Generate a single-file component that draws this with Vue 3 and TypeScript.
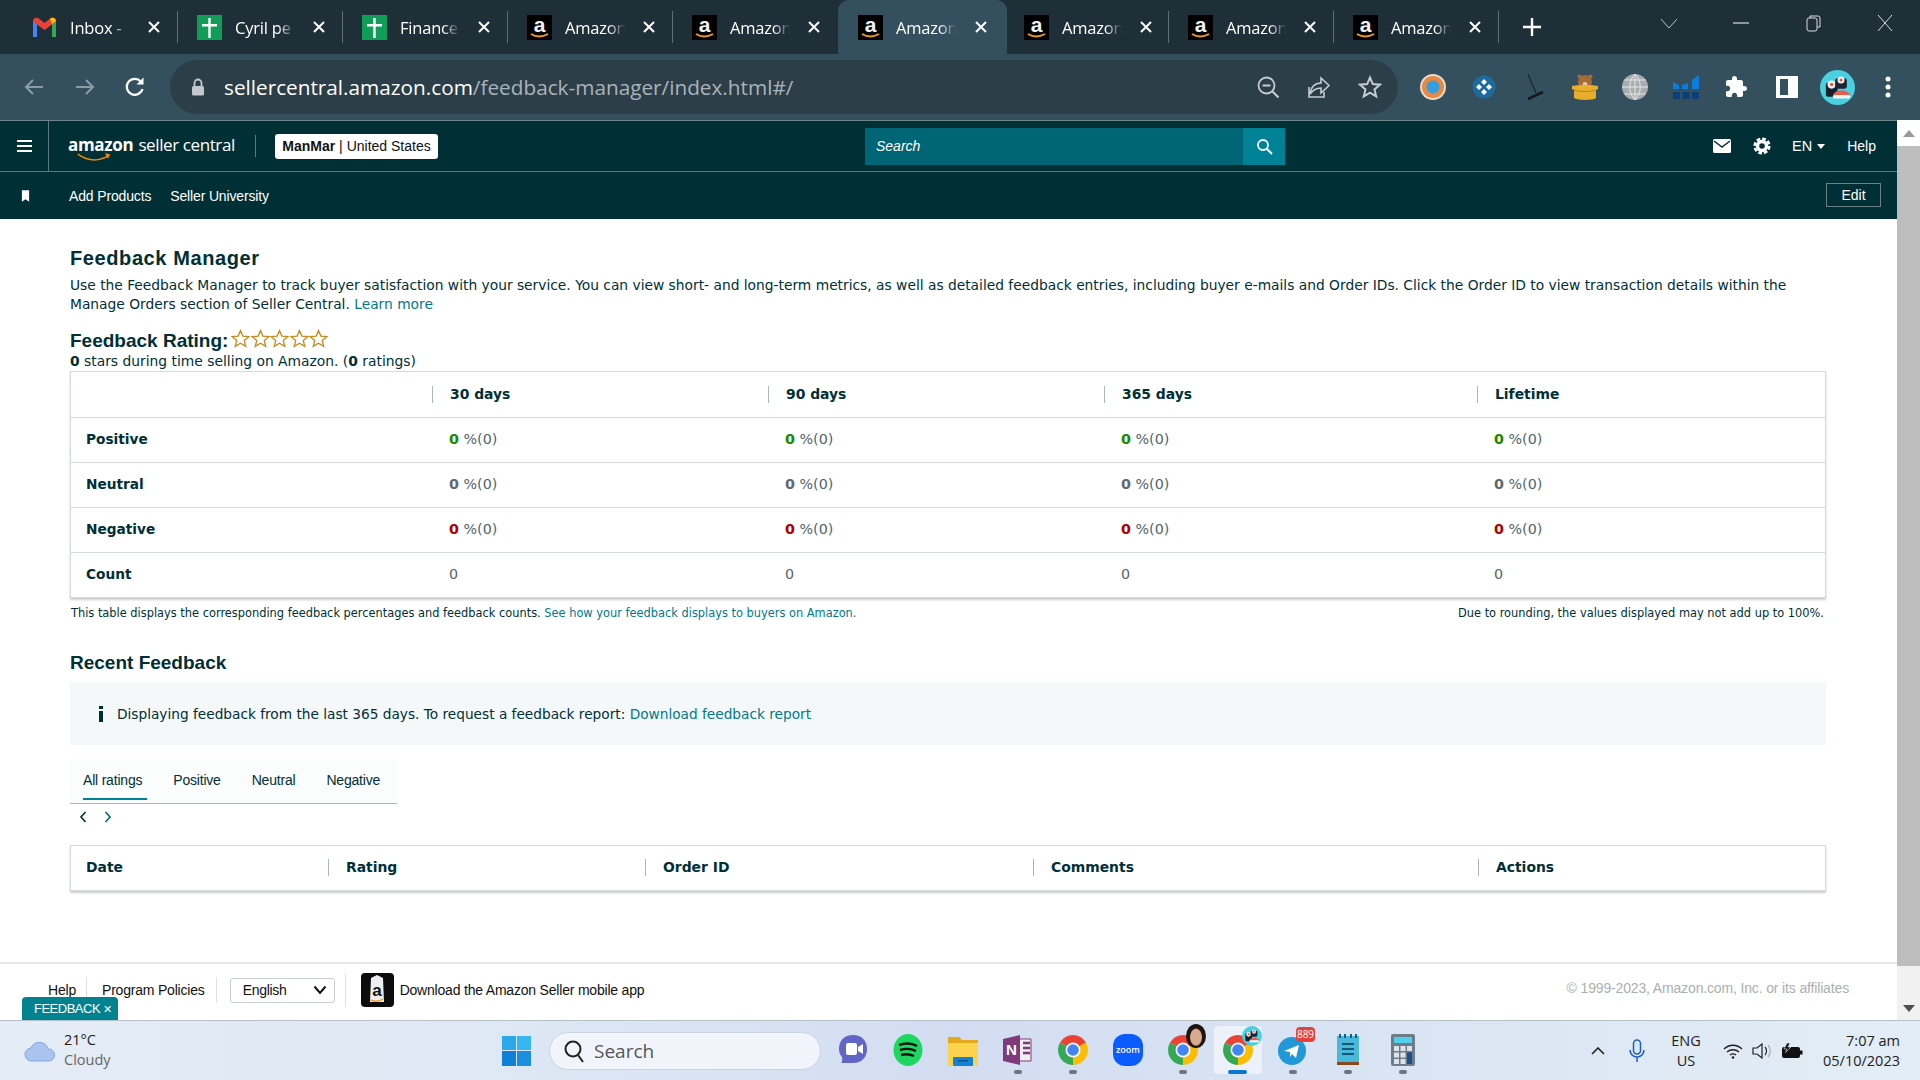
<script setup lang="ts">
interface BrowserTab {
  icon: string;
  title: string;
}

const tabs: BrowserTab[] = [
  { icon: "gmail", title: "Inbox -" },
  { icon: "sheets", title: "Cyril pe" },
  { icon: "sheets", title: "Finance" },
  { icon: "amazon", title: "Amazon" },
  { icon: "amazon", title: "Amazon" },
  { icon: "amazon", title: "Amazon" },
  { icon: "amazon", title: "Amazon" },
  { icon: "amazon", title: "Amazon" },
  { icon: "amazon", title: "Amazon" },
];
const activeTab = 5;

const periods = ["30 days", "90 days", "365 days", "Lifetime"];
const rows = [
  { label: "Positive", tone: "good" },
  { label: "Neutral", tone: "flat" },
  { label: "Negative", tone: "bad" },
];
const ratingTabs = ["All ratings", "Positive", "Neutral", "Negative"];
const recentColumns = ["Date", "Rating", "Order ID", "Comments", "Actions"];
const dots = ["", "", "", "y", "y", "", "y", "a", "y", "y", "y"];
</script>

<template>
  <div class="screen">
    <svg class="defs" width="0" height="0">
      <symbol id="amazon" viewBox="0 0 25 25">
        <rect width="25" height="25" fill="#000" />
        <text x="12.5" y="16.500" text-anchor="middle" font-family="Liberation Sans, sans-serif" font-weight="700" font-size="21" fill="#f2f2f2">a</text>
        <path d="M4 19q8 5 17 0" fill="none" stroke="#f09a1f" stroke-width="2" />
      </symbol>
      <symbol id="sheets" viewBox="0 0 25 25">
        <rect width="25" height="25" fill="#0f9d58" />
        <path d="M11.3 3h2.4v6H20v2.4h-6.3V23h-2.4V11.4H5V9h6.3z" fill="#fff" />
      </symbol>
      <symbol id="gmail" viewBox="0 0 25 25">
        <path d="M1 22V6l4 2v14z" fill="#4285f4" />
        <path d="M20 22V8l4-2v16z" fill="#34a853" />
        <path d="M1 6c0-3 3-4 5-3l6.500 5L19 3c2-1 5 0 5 3l-4 3.500-7.500 5.500L5 9.500z" fill="#ea4335" />
        <path d="M20 9l4-3c0-3-3-4-5-3l-1 1z" fill="#fbbc04" />
      </symbol>
      <symbol id="chrome" viewBox="0 0 30 30">
        <path d="M15 15L2.010 7.500A15 15 0 0 1 27.990 7.500Z" fill="#ea4335" />
        <path d="M15 15L27.990 7.500A15 15 0 0 1 15 30Z" fill="#fbbc04" />
        <path d="M15 15L15 30A15 15 0 0 1 2.010 7.500Z" fill="#34a853" />
        <circle cx="15" cy="15" r="7.500" fill="#fff" />
        <circle cx="15" cy="15" r="5.800" fill="#4285f4" />
      </symbol>
      <symbol id="sushi" viewBox="0 0 30 30">
        <circle cx="15" cy="15" r="15" fill="#4ad0e0" />
        <rect x="5" y="11" width="10" height="12" rx="2" fill="#14202c" />
        <circle cx="10" cy="12.500" r="3.500" fill="#f3f3f3" />
        <circle cx="10" cy="12.500" r="1.500" fill="#e8534a" />
        <rect x="13" y="7" width="10" height="9" rx="2" fill="#1d2433" />
        <circle cx="18" cy="8.500" r="3" fill="#f3f3f3" />
        <circle cx="18" cy="8.500" r="1.300" fill="#e8534a" />
        <path d="M11 22c1-6 14-6 15 0z" fill="#ef5a4c" />
        <rect x="11" y="21.500" width="15" height="3" rx="1.500" fill="#f5f5f5" />
      </symbol>
    </svg>

    <!-- browser chrome -->
    <div class="tabstrip">
      <div
        v-for="(tab, i) in tabs"
        :key="i"
        class="tab"
        :class="{ active: i === activeTab, afterActive: i === activeTab + 1, plain: i === activeTab - 1 }"
      >
        <svg class="favicon"><use :href="'#' + tab.icon" /></svg>
        <span class="tabTitle">{{ tab.title }}</span>
        <svg class="tabClose" viewBox="0 0 14 14"><path d="M2 2l10 10M12 2L2 12" stroke="#fff" stroke-width="2" /></svg>
      </div>
      <svg class="newTab" viewBox="0 0 20 20"><path d="M10 1v18M1 10h18" stroke="#fff" stroke-width="2.400" /></svg>
      <div class="windowBtns">
        <svg class="winBtn" viewBox="0 0 18 18"><path d="M1 5l8 9 8-9" fill="none" stroke="#b7c0c5" stroke-width="1" /></svg>
        <svg class="winBtn" viewBox="0 0 18 18"><path d="M1 9h16" stroke="#d8dde0" stroke-width="1.200" /></svg>
        <svg class="winBtn" viewBox="0 0 18 18"><rect x="3" y="4" width="10" height="13" rx="2" fill="none" stroke="#d8dde0" /><path d="M6 4V2h8a2 2 0 0 1 2 2v9h-3" fill="none" stroke="#d8dde0" /></svg>
        <svg class="winBtn" viewBox="0 0 18 18"><path d="M2 1l14 16M16 1L2 17" stroke="#d8dde0" stroke-width="1" /></svg>
      </div>
    </div>

    <div class="toolbar">
      <svg class="navIcon" viewBox="0 0 24 24"><path d="M21 12H4M11 5l-7 7 7 7" fill="none" stroke="#8b9ca5" stroke-width="2" /></svg>
      <svg class="navIcon forward" viewBox="0 0 24 24"><path d="M3 12h17M13 5l7 7-7 7" fill="none" stroke="#8b9ca5" stroke-width="2" /></svg>
      <svg class="navIcon reload" viewBox="0 0 24 24"><path d="M19.500 14a8 8 0 1 1-1.700-7.500" fill="none" stroke="#fff" stroke-width="2.200" /><path d="M20.500 2.500v7h-7z" fill="#fff" /></svg>
      <div class="urlBar">
        <svg class="lock" viewBox="0 0 14 18"><path d="M3.500 8V5a3.500 3.500 0 0 1 7 0v3" fill="none" stroke="#c3c9cc" stroke-width="1.800" /><rect x="1" y="8" width="12" height="9.500" rx="1.500" fill="#c3c9cc" /></svg>
        <span class="url"><span class="host">sellercentral.amazon.com</span>/feedback-manager/index.html#/</span>
        <svg class="urlIcon first" viewBox="0 0 24 24"><circle cx="10.500" cy="10.500" r="8" fill="none" stroke="#c6ccd0" stroke-width="1.800" /><path d="M6.500 10.500h8M16 16l6.500 6.500" stroke="#c6ccd0" stroke-width="2" /></svg>
        <svg class="urlIcon" viewBox="0 0 24 24"><path d="M2 12v10h15v-5M3 19c1-7 5-11 11-11V3l8 7.500-8 7.500v-5c-5 0-8 2-11 6z" fill="none" stroke="#c6ccd0" stroke-width="1.600" /></svg>
        <svg class="urlIcon" viewBox="0 0 24 24"><path d="M12 2.500l2.800 6.600 7.200.6-5.500 4.700 1.700 7-6.200-3.700-6.200 3.700 1.700-7L2 9.700l7.200-.6z" fill="none" stroke="#c6ccd0" stroke-width="2" /></svg>
      </div>
      <div class="extensions">
        <svg class="ext" viewBox="0 0 28 28"><circle cx="14" cy="14" r="13" fill="#ecd9c8" /><circle cx="14" cy="14" r="11" fill="#e58a45" /><circle cx="14" cy="14" r="6.500" fill="#2f9fe0" /></svg>
        <svg class="ext" viewBox="0 0 28 28"><circle cx="14" cy="14" r="11.500" fill="#1d6b9c" /><path d="M14 6l3 3-3 3-3-3zM14 16l3 3-3 3-3-3zM6 14l3-3 3 3-3 3zM16 14l3-3 3 3-3 3z" fill="#fff" /></svg>
        <svg class="ext" viewBox="0 0 28 28"><path d="M8 1l8 19" stroke="#15191c" stroke-width="1" /><path d="M8 26l15-7" stroke="#15191c" stroke-width="2.500" /></svg>
        <svg class="ext" viewBox="0 0 28 28"><circle cx="14" cy="9" r="7" fill="#a66a35" /><circle cx="8.500" cy="3.500" r="2" fill="#a66a35" /><circle cx="19.500" cy="3.500" r="2" fill="#a66a35" /><ellipse cx="14" cy="11" rx="2.500" ry="2" fill="#e7c9a0" /><path d="M1 13c3-1.500 23-1.500 26 0v3l-2 1v8c-3 2.500-18 2.500-22 0v-8l-2-1z" fill="#e7ae2b" /><path d="M3 17c5 2 17 2 22 0" stroke="#b9851a" fill="none" /></svg>
        <svg class="ext" viewBox="0 0 28 28"><circle cx="14" cy="14" r="13" fill="#a9adb0" /><path d="M1 14h26M3.500 7h21M3.500 21h21M14 1v26M14 1c-7 7-7 19 0 26M14 1c7 7 7 19 0 26" fill="none" stroke="#e6e8e9" stroke-width="1" /></svg>
        <svg class="ext" viewBox="0 0 28 28"><path d="M1 9l6 3v4H1zM10 12l6-2v6h-6zM20 7l7-5v14h-7z" fill="#0b7de0" /><path d="M1 19h7v7H1zM10.500 19h7v7h-7zM20 19h7v7h-7z" fill="#0a3f78" /></svg>
        <svg class="ext" viewBox="-2 -2 28 28"><path d="M20.500 11H19V7c0-1.100-.9-2-2-2h-4V3.500C13 2.120 11.880 1 10.500 1S8 2.120 8 3.500V5H4c-1.100 0-1.990.9-1.990 2v3.800H3.500c1.490 0 2.700 1.210 2.700 2.700s-1.210 2.700-2.700 2.700H2V20c0 1.100.9 2 2 2h3.800v-1.500c0-1.490 1.210-2.700 2.700-2.700 1.490 0 2.700 1.210 2.700 2.700V22H17c1.100 0 2-.9 2-2v-4h1.500c1.380 0 2.500-1.120 2.500-2.500S21.880 11 20.500 11z" fill="#fff" /></svg>
        <svg class="ext" viewBox="0 0 28 28"><path d="M3 3h22v22H3z" fill="#fff" /><path d="M7 6h8v16H7z" fill="#34505e" /></svg>
        <svg class="ext avatar" viewBox="0 0 30 30"><use href="#sushi" /></svg>
        <svg class="ext" viewBox="0 0 28 28"><circle cx="14" cy="6" r="2.500" fill="#fff" /><circle cx="14" cy="14" r="2.500" fill="#fff" /><circle cx="14" cy="22" r="2.500" fill="#fff" /></svg>
      </div>
    </div>

    <div class="middle">
      <div class="page">
        <!-- seller central header -->
        <header class="navTop">
          <div class="burger"><span></span><span></span><span></span></div>
          <div class="logo">
            <span class="logoAmazon">amazon<svg class="smile" viewBox="0 0 44 12"><path d="M1 1q20 14 40 2" fill="none" stroke="#f08804" stroke-width="2" /><path d="M36 0l7 1-3 6z" fill="#f08804" /></svg></span>
            <span class="logoSeller">seller central</span>
          </div>
          <div class="logoRule"></div>
          <div class="account"><b>ManMar</b> | United States</div>
          <div class="search">
            <span class="searchText">Search</span>
            <span class="searchBtn">
              <svg width="17" height="17" viewBox="0 0 17 17"><circle cx="7" cy="7" r="5" fill="none" stroke="#fff" stroke-width="1.800" /><path d="M10.500 10.500l5.500 5.500" stroke="#fff" stroke-width="2" /></svg>
            </span>
          </div>
          <div class="navRight">
            <svg class="mail" viewBox="0 0 18 14"><rect width="18" height="14" rx="1.500" fill="#fff" /><path d="M1 2l8 6 8-6" fill="none" stroke="#002f36" stroke-width="1.500" /></svg>
            <svg class="gear" viewBox="0 0 18 18"><circle cx="9" cy="9" r="4.500" fill="none" stroke="#fff" stroke-width="3.400" /><circle cx="9" cy="9" r="7.300" fill="none" stroke="#fff" stroke-width="2.600" stroke-dasharray="3.730 2" /></svg>
            <span class="lang">EN</span><span class="caret"></span>
            <span class="helpTop">Help</span>
          </div>
        </header>
        <div class="navSub">
          <svg class="bookmark" viewBox="0 0 10 13"><path d="M1 0h8v13L5 10l-4 3z" fill="#fff" /></svg>
          <span class="navLink first">Add Products</span>
          <span class="navLink">Seller University</span>
          <span class="editBtn">Edit</span>
        </div>

        <main class="content">
          <h1 class="heading">Feedback Manager</h1>
          <p class="intro">
            Use the Feedback Manager to track buyer satisfaction with your service. You can view short- and long-term metrics, as well as detailed feedback entries, including buyer e-mails and Order IDs. Click the Order ID to view transaction details within the Manage Orders section of Seller Central.
            <a class="link">Learn more</a>
          </p>

          <div class="ratingTitle">
            <span>Feedback Rating:</span>
            <svg v-for="n in 5" :key="n" class="star" viewBox="0 0 24 24"><path d="M12 2l3 7 7.500.7-5.700 4.900 1.800 7.400-6.600-4-6.600 4 1.800-7.400L1.500 9.700 9 9z" fill="none" stroke="#c98a1f" stroke-width="1.700" /></svg>
          </div>
          <div class="ratingSub"><b>0</b> stars during time selling on Amazon. (<b>0</b> ratings)</div>

          <div class="panel">
            <div class="metricRow head">
              <div></div>
              <div v-for="p in periods" :key="p"><span class="colHead">{{ p }}</span></div>
            </div>
            <div v-for="row in rows" :key="row.label" class="metricRow">
              <div class="rowLabel">{{ row.label }}</div>
              <div v-for="p in periods" :key="p" class="value">
                <b :class="row.tone">0</b> %(0)
              </div>
            </div>
            <div class="metricRow">
              <div class="rowLabel">Count</div>
              <div v-for="p in periods" :key="p" class="value">0</div>
            </div>
          </div>

          <div class="notes">
            <span>This table displays the corresponding feedback percentages and feedback counts. <a class="link">See how your feedback displays to buyers on Amazon.</a></span>
            <span>Due to rounding, the values displayed may not add up to 100%.</span>
          </div>

          <h2 class="recent">Recent Feedback</h2>
          <div class="infoBox">
            <svg class="infoIcon" viewBox="0 0 4 16"><rect y="0" width="4" height="3" fill="#002f36" /><rect y="5" width="4" height="11" fill="#002f36" /></svg>
            <span>Displaying feedback from the last 365 days. To request a feedback report: <a class="link">Download feedback report</a></span>
          </div>

          <div class="ratingTabs">
            <span v-for="(t, i) in ratingTabs" :key="t" class="ratingTab" :class="{ on: i === 0 }">{{ t }}</span>
          </div>
          <div class="pager">
            <svg width="8" height="12" viewBox="0 0 8 12"><path d="M6.500 1L2 6l4.500 5" fill="none" stroke="#002f36" stroke-width="1.600" /></svg>
            <svg width="8" height="12" viewBox="0 0 8 12"><path d="M1.500 1L6 6l-4.500 5" fill="none" stroke="#00687a" stroke-width="1.600" /></svg>
          </div>

          <div class="panel recentPanel">
            <div class="recentRow">
              <div v-for="(c, i) in recentColumns" :key="c">
                <span :class="i === 0 ? 'firstHead' : 'colHead'">{{ c }}</span>
              </div>
            </div>
          </div>
        </main>

        <footer class="footer">
          <div class="footLeft">
            <span class="footLink help">Help</span>
            <span class="footLink policies">Program Policies</span>
            <div class="langSelect">
              <span>English</span>
              <svg width="14" height="10" viewBox="0 0 14 10"><path d="M1.500 1.500L7 8l5.500-6.500" fill="none" stroke="#111" stroke-width="2" /></svg>
            </div>
            <div class="appBlock">
              <svg class="appIcon" viewBox="0 0 33 34">
                <rect width="33" height="34" rx="4" fill="#0c0c0c" />
                <path d="M10 5l6-3 6 3 1 24H9z" fill="#eceff0" />
                <text x="16" y="23" text-anchor="middle" font-family="Liberation Sans, sans-serif" font-weight="700" font-size="17" fill="#111">a</text>
                <path d="M10 27q6 3 12-1" fill="none" stroke="#f09a1f" stroke-width="1.500" />
              </svg>
              <span>Download the Amazon Seller mobile app</span>
            </div>
          </div>
          <span class="copyright">© 1999-2023, Amazon.com, Inc. or its affiliates</span>
          <div class="feedbackTab">FEEDBACK <span class="fbClose">✕</span></div>
        </footer>
      </div>

      <div class="scrollbar">
        <div class="scrollTop"><span class="arrowUp"></span></div>
        <div class="scrollThumb"></div>
        <div class="scrollEnd"><span class="arrowDown"></span></div>
      </div>
    </div>

    <!-- windows taskbar -->
    <div class="taskbar">
      <div class="weather">
        <svg class="cloud" viewBox="0 0 32 24"><path d="M8 22a6.500 6.500 0 0 1-1-13 9 9 0 0 1 17 1 6 6 0 0 1 1 12z" fill="#a9c4ee" stroke="#7ea5e0" /></svg>
        <div class="weatherText">
          <span>21°C</span>
          <span class="muted">Cloudy</span>
        </div>
      </div>
      <svg class="winLogo" viewBox="0 0 29 30">
        <path d="M0 0h14v14H0z" fill="#29a8ea" /><path d="M15 0h14v14H15z" fill="#36b7f0" />
        <path d="M0 15h14v15H0z" fill="#0f7fd8" /><path d="M15 15h14v15H15z" fill="#1a8fe0" />
      </svg>
      <div class="winSearch">
        <svg width="22" height="24" viewBox="0 0 22 24"><circle cx="10" cy="10" r="7.500" fill="none" stroke="#222" stroke-width="2" /><path d="M15 16l5 7" stroke="#222" stroke-width="2" /></svg>
        <span>Search</span>
      </div>
      <div class="appRow">
        <div v-for="(d, i) in dots" :key="i" class="app" :class="{ current: d === 'a' }">
          <svg v-if="i === 0" class="appGlyph" viewBox="0 0 30 32"><path d="M15 1c9 0 14 6 14 14s-5 14-14 14H3c2-2 1-4 1-6-2-2-3-5-3-8C1 7 6 1 15 1z" fill="#6264c6" /><rect x="8" y="9" width="11" height="12" rx="2" fill="#fff" /><path d="M20 13l5-3v10l-5-3z" fill="#fff" /></svg>
          <svg v-else-if="i === 1" class="appGlyph" viewBox="0 0 30 32"><ellipse cx="15" cy="16" rx="14.500" ry="16" fill="#1ed760" /><path d="M6 11c6-2 13-2 18 1M7 16c5-1.500 11-1.500 16 1M8 21c4-1 9-1 13 1" fill="none" stroke="#111" stroke-width="2.400" /></svg>
          <svg v-else-if="i === 2" class="appGlyph" viewBox="0 0 30 32"><path d="M0 3h11l3 3h16v24H0z" fill="#e3a81c" /><rect y="9" width="30" height="23" fill="#fbd34d" /><rect x="5" y="23" width="20" height="9" rx="1" fill="#1283d4" /><rect x="10" y="26" width="10" height="1.500" fill="#0a4f8c" /></svg>
          <svg v-else-if="i === 3" class="appGlyph" viewBox="0 0 30 32"><path d="M16 5h12v22H16z" fill="#eee" stroke="#80397b" /><path d="M20 9h7M20 14h7M20 19h7" stroke="#80397b" stroke-width="2.500" /><path d="M0 5l17-4v30L0 27z" fill="#80397b" /><text x="8.500" y="21" text-anchor="middle" font-family="Liberation Sans, sans-serif" font-weight="700" font-size="15" fill="#fff">N</text></svg>
          <svg v-else-if="i === 5" class="appGlyph" viewBox="0 0 30 32"><rect width="30" height="32" rx="12" fill="#0b5cff" /><text x="15" y="19" text-anchor="middle" font-family="Open Sans, sans-serif" font-weight="600" font-size="9" fill="#fff">zoom</text></svg>
          <svg v-else-if="i === 8" class="appGlyph" viewBox="0 0 30 32"><circle cx="14" cy="17" r="14" fill="#2198d8" /><path d="M6 17l15-6-3 13-4-4-2 3v-5z" fill="#fff" /></svg>
          <svg v-else-if="i === 9" class="appGlyph" viewBox="0 0 30 32"><rect x="4" y="2" width="22" height="28" fill="#4ab8da" /><path d="M7 0v4M12 0v4M18 0v4M23 0v4" stroke="#1e5d78" stroke-width="2" /><path d="M9 10h12M9 15h12M9 20h12" stroke="#125a76" stroke-width="2" /><rect x="4" y="28" width="22" height="3" fill="#8a4a1f" /></svg>
          <svg v-else-if="i === 10" class="appGlyph" viewBox="0 0 30 32"><rect x="3" width="24" height="32" rx="2" fill="#6d7c88" /><rect x="6" y="3" width="18" height="6" fill="#4fd0ef" /><path d="M6 12h5v5H6zM12.500 12h5v5h-5zM19 12h5v5h-5zM6 18.500h5v5H6zM12.500 18.500h5v5h-5zM6 25h5v5H6zM12.500 25h5v5h-5z" fill="#dde3e8" /><rect x="19" y="18.500" width="5" height="11.500" fill="#1a4f8c" /></svg>
          <svg v-else class="appGlyph" viewBox="0 0 30 30"><use href="#chrome" /></svg>

          <span v-if="i === 6" class="faceBadge"></span>
          <svg v-if="i === 7" class="sushiBadge" viewBox="0 0 30 30"><use href="#sushi" /></svg>
          <span v-if="i === 8" class="countBadge">889</span>
          <span v-if="d" class="runDot" :class="{ currentDot: d === 'a' }"></span>
        </div>
      </div>
      <div class="tray">
        <svg class="trayCaret" viewBox="0 0 14 8"><path d="M1 7l6-6 6 6" fill="none" stroke="#222" stroke-width="1.600" /></svg>
        <svg class="mic" viewBox="0 0 16 24"><rect x="4.500" y="1" width="7" height="14" rx="3.500" fill="none" stroke="#1c5fc0" stroke-width="1.500" /><path d="M1 11a7 7 0 0 0 14 0M8 18v5" fill="none" stroke="#1c5fc0" stroke-width="1.500" /></svg>
        <div class="trayLang"><span>ENG</span><span>US</span></div>
        <svg class="wifi" viewBox="0 0 20 16"><path d="M1 6c5-5 13-5 18 0M4 9c3.500-3 8.500-3 12 0M7 12c2-1.500 4-1.500 6 0" fill="none" stroke="#222" stroke-width="1.400" /><circle cx="10" cy="14.500" r="1.300" fill="#222" /></svg>
        <svg class="speaker" viewBox="0 0 20 16"><path d="M1 5h4l5-4v14l-5-4H1z" fill="none" stroke="#222" stroke-width="1.200" /><path d="M13 4c2 2 2 6 0 8" fill="none" stroke="#222" stroke-width="1.200" /><path d="M16 2c3 3 3 9 0 12" fill="none" stroke="#aaa" stroke-width="1.200" /></svg>
        <svg class="battery" viewBox="0 0 22 16"><rect x="1" y="4" width="18" height="11" rx="2" fill="#111" /><rect x="19" y="7.500" width="2.500" height="4" fill="#111" /><path d="M6 0L3 6h3L4.500 9.500 10 4H7l2-4z" fill="#111" stroke="#e3ecf6" stroke-width=".6" /></svg>
        <div class="clock"><span>7:07 am</span><span>05/10/2023</span></div>
      </div>
    </div>
  </div>
</template>

<style scoped>
.screen {
  width: 1920px;
  height: 1080px;
  display: flex;
  flex-direction: column;
  overflow: hidden;
  font-family: "DejaVu Sans", sans-serif;
  background: #fff;
}
.defs {
  position: absolute;
}

/* tabs */
.tabstrip {
  height: 54px;
  flex: none;
  display: flex;
  align-items: center;
  padding-left: 13px;
  background: #1f2f37;
  color: #fff;
  font-family: "Open Sans", sans-serif;
}
.tab {
  width: 165px;
  height: 54px;
  flex: none;
  display: flex;
  align-items: center;
  padding-left: 19px;
  box-sizing: border-box;
  position: relative;
}
.tab::after {
  content: "";
  position: absolute;
  right: 0;
  top: 11px;
  width: 1px;
  height: 32px;
  background: #5e6f78;
}
.tab.plain::after,
.tab.active::after {
  display: none;
}
.tab.active {
  width: 169px;
  padding-left: 20px;
  background: #34505e;
  border-radius: 11px 11px 0 0;
}
.tab.active .tabClose {
  margin-left: 18px;
}
.tab.afterActive {
  width: 162px;
  padding-left: 17px;
}
.favicon {
  width: 25px;
  height: 25px;
  flex: none;
  margin-right: 13px;
}
.tabTitle {
  width: 60px;
  flex: none;
  overflow: hidden;
  white-space: nowrap;
  font-size: 16.500px;
  letter-spacing: -0.2px;
  -webkit-mask-image: linear-gradient(to right, #000 72%, transparent);
  mask-image: linear-gradient(to right, #000 72%, transparent);
}
.tabClose {
  width: 14px;
  height: 14px;
  flex: none;
  margin-left: 17px;
}
.newTab {
  width: 20px;
  height: 20px;
  margin-left: 23px;
}
.windowBtns {
  margin-left: auto;
  display: flex;
  gap: 54px;
  padding-right: 26px;
}
.winBtn {
  width: 18px;
  height: 18px;
  margin-bottom: 8px;
}

/* address bar */
.toolbar {
  height: 66px;
  flex: none;
  display: flex;
  align-items: center;
  background: #34505e;
  box-sizing: border-box;
  padding: 0 0 0 22px;
}
.navIcon {
  width: 24px;
  height: 24px;
  flex: none;
}
.navIcon.forward {
  margin-left: 27px;
}
.navIcon.reload {
  margin-left: 26px;
  margin-right: 23px;
}
.urlBar {
  width: 1228px;
  height: 54px;
  flex: none;
  display: flex;
  align-items: center;
  background: #2c3e48;
  border-radius: 27px;
  padding: 0 16px 0 21px;
  box-sizing: border-box;
}
.lock {
  width: 14px;
  height: 18px;
  flex: none;
}
.url {
  margin-left: 19px;
  font-family: "Open Sans", sans-serif;
  font-size: 20.750px;
  color: #a9b4ba;
  white-space: nowrap;
}
.host {
  color: #fff;
}
.urlIcon {
  width: 24px;
  height: 24px;
  flex: none;
  margin-left: 27px;
}
.urlIcon.first {
  margin-left: auto;
}
.extensions {
  display: flex;
  align-items: center;
  gap: 22.500px;
  margin-left: 21px;
}
.ext {
  width: 28px;
  height: 28px;
  flex: none;
}
.ext.avatar {
  width: 35px;
  height: 35px;
  margin: 0 -3.500px;
}

.middle {
  height: 900px;
  flex: none;
  display: flex;
}
.page {
  flex: 1;
  min-width: 0;
  display: flex;
  flex-direction: column;
}

/* seller central nav */
.navTop {
  height: 52px;
  flex: none;
  display: flex;
  align-items: center;
  background: #002f36;
  border-top: 1px solid #6c858b;
  border-bottom: 1px solid #5f777c;
  box-sizing: border-box;
  color: #fff;
  font-family: "Liberation Sans", sans-serif;
}
.burger {
  width: 49px;
  height: 100%;
  flex: none;
  display: flex;
  flex-direction: column;
  justify-content: center;
  gap: 3px;
  padding-left: 17px;
  box-sizing: border-box;
  border-right: 1px solid #5f777c;
}
.burger span {
  width: 15px;
  height: 2px;
  background: #fff;
}
.logo {
  width: 187px;
  flex: none;
  margin-left: 19px;
  margin-top: -3px;
  display: flex;
  align-items: baseline;
  gap: 5px;
  font-family: "Open Sans", sans-serif;
  white-space: nowrap;
}
.logoRule {
  width: 1px;
  height: 22px;
  flex: none;
  background: #5f777c;
}
.logoAmazon {
  position: relative;
  font-size: 17px;
  font-weight: 700;
  letter-spacing: -0.3px;
}
.smile {
  position: absolute;
  left: 9px;
  top: 20px;
  width: 34px;
  height: 10px;
}
.logoSeller {
  font-size: 17px;
  font-weight: 400;
  letter-spacing: -0.4px;
}
.account {
  margin-left: 19px;
  width: 163px;
  height: 25px;
  flex: none;
  background: #fff;
  border-radius: 3px;
  color: #111;
  font-size: 14px;
  line-height: 25px;
  text-align: center;
  white-space: nowrap;
}
.search {
  margin-left: 427px;
  width: 420px;
  height: 37px;
  flex: none;
  display: flex;
  align-items: center;
  justify-content: space-between;
  background: #006574;
}
.searchText {
  margin-left: 11px;
  font-size: 14px;
  font-style: italic;
}
.searchBtn {
  width: 42px;
  height: 37px;
  display: flex;
  align-items: center;
  justify-content: center;
  background: #008296;
}
.navRight {
  flex: 1;
  display: flex;
  align-items: center;
  padding-right: 21px;
  justify-content: flex-end;
}
.mail {
  width: 18px;
  height: 14px;
}
.gear {
  width: 18px;
  height: 18px;
  margin-left: 22px;
}
.lang {
  margin-left: 21px;
  font-size: 14.500px;
}
.caret {
  margin-left: 5px;
  border: 4.500px solid transparent;
  border-top: 5px solid #fff;
  border-bottom: 0;
}
.helpTop {
  margin-left: 22px;
  font-size: 14px;
}
.navSub {
  height: 47px;
  flex: none;
  display: flex;
  align-items: center;
  background: #002f36;
  color: #fff;
  font-family: "Liberation Sans", sans-serif;
  font-size: 14px;
}
.bookmark {
  width: 9px;
  height: 12px;
  margin-left: 21px;
}
.navLink {
  margin-left: 19px;
  letter-spacing: -0.15px;
}
.navLink.first {
  margin-left: 39px;
}
.editBtn {
  margin-left: auto;
  margin-right: 16px;
  margin-top: -2px;
  width: 55px;
  height: 24px;
  box-sizing: border-box;
  border: 1px solid #6b8086;
  line-height: 22px;
  text-align: center;
}

/* page body */
.content {
  padding: 27px 71px 0 70px;
  color: #0f1111;
  font-size: 14px;
}
.heading {
  margin: 0;
  font-family: "Liberation Sans", sans-serif;
  font-size: 20px;
  font-weight: 700;
  line-height: 24px;
  letter-spacing: 0.6px;
  color: #002f36;
}
.intro {
  margin: 6px 0 0;
  font-size: 13.800px;
  line-height: 19px;
  color: #002f36;
}
.link {
  color: #00798c;
}
.ratingTitle {
  margin-top: 15px;
  height: 24px;
  display: flex;
  align-items: center;
  font-family: "Liberation Sans", sans-serif;
  font-size: 19px;
  font-weight: 700;
  color: #002f36;
}
.ratingTitle span {
  margin-right: 3px;
}
.star {
  width: 19px;
  height: 19px;
  margin-right: 0.4px;
  margin-top: -5px;
}
.ratingSub {
  font-size: 13.850px;
  line-height: 17px;
  color: #002f36;
}
.panel {
  margin-top: 1px;
  border: 1px solid #d5dbdb;
  box-shadow: 0 2px 2px rgba(0, 0, 0, 0.2);
  color: #002f36;
}
.metricRow {
  height: 45.100px;
  box-sizing: border-box;
  padding-bottom: 2px;
  display: grid;
  grid-template-columns: 361px 336px 336px 373px 1fr;
  align-items: center;
  border-top: 1px solid #d5dbdb;
}
.metricRow.head {
  border-top: 0;
  padding-bottom: 0;
}
.colHead {
  display: inline-block;
  padding-left: 17px;
  border-left: 1px solid #aab7b8;
  line-height: 17px;
  font-weight: 700;
  font-size: 13.900px;
}
.rowLabel {
  padding-left: 15px;
  font-size: 13.700px;
  font-weight: 700;
}
.value {
  padding-left: 17px;
  font-size: 14.300px;
  color: #52656a;
}
.good {
  color: #1a8a00;
}
.flat {
  color: #5d6a70;
}
.bad {
  color: #b00000;
}
.notes {
  margin-top: 8px;
  display: flex;
  justify-content: space-between;
  padding: 0 2px 0 1px;
  font-size: 11.400px;
  line-height: 14px;
  color: #002f36;
}
.recent {
  margin: 31px 0 0;
  font-family: "Liberation Sans", sans-serif;
  font-size: 19px;
  font-weight: 700;
  line-height: 24px;
  color: #002f36;
}
.infoBox {
  margin-top: 7px;
  height: 63px;
  display: flex;
  align-items: center;
  background: #f5f8f8;
  color: #002f36;
  font-size: 13.700px;
}
.infoIcon {
  width: 4px;
  height: 16px;
  margin: 0 14px 0 29px;
}
.ratingTabs {
  margin-top: 14px;
  width: 327px;
  height: 45px;
  box-sizing: border-box;
  display: flex;
  align-items: center;
  padding: 0 0 2px 13px;
  gap: 31px;
  background: #fbfcfc;
  border-bottom: 1px solid #aab7b8;
  font-family: "Liberation Sans", sans-serif;
  font-size: 14px;
  color: #002f36;
}
.ratingTab {
  position: relative;
  letter-spacing: -0.2px;
}
.ratingTab.on::after {
  content: "";
  position: absolute;
  left: 0;
  right: -5px;
  top: 26px;
  height: 2px;
  background: #008296;
}
.pager {
  height: 26px;
  display: flex;
  align-items: center;
  gap: 17px;
  padding-left: 9px;
}
.recentPanel {
  margin-top: 15px;
}
.recentRow {
  height: 44px;
  box-sizing: border-box;
  padding-bottom: 2px;
  display: grid;
  grid-template-columns: 257px 317px 388px 445px 1fr;
  align-items: center;
}
.firstHead {
  padding-left: 15px;
  font-weight: 700;
  font-size: 13.900px;
}

/* footer */
.footer {
  margin-top: auto;
  height: 58px;
  flex: none;
  position: relative;
  box-sizing: border-box;
  padding-bottom: 4px;
  border-top: 2px solid #e7e9e9;
  display: flex;
  align-items: center;
  justify-content: space-between;
  font-family: "Liberation Sans", sans-serif;
  font-size: 14px;
  color: #111;
}
.footLeft {
  display: flex;
  align-items: center;
  padding-left: 48px;
}
.footLink {
  letter-spacing: -0.2px;
}
.footLink.help {
  padding-right: 10px;
  border-right: 1px solid #e0e0e0;
  line-height: 26px;
}
.footLink.policies {
  padding: 0 11px 0 15px;
  border-right: 1px solid #e0e0e0;
  line-height: 26px;
}
.langSelect {
  margin-left: 13px;
  width: 105px;
  height: 25px;
  box-sizing: border-box;
  display: flex;
  align-items: center;
  justify-content: space-between;
  padding: 0 7px 0 12px;
  border: 1px solid #c9cfcf;
  border-radius: 3px;
  letter-spacing: -0.3px;
}
.appBlock {
  margin-left: 10px;
  padding-left: 15px;
  display: flex;
  align-items: center;
  gap: 6px;
  border-left: 1px solid #e0e0e0;
  letter-spacing: -0.2px;
}
.appIcon {
  width: 33px;
  height: 34px;
}
.copyright {
  margin-right: 48px;
  margin-top: -4px;
  color: #aab0b0;
  letter-spacing: -0.15px;
}
.feedbackTab {
  position: absolute;
  left: 22px;
  bottom: 0;
  width: 96px;
  height: 23px;
  box-sizing: border-box;
  padding-left: 12px;
  background: #00838f;
  color: #fff;
  border-radius: 4px 4px 0 0;
  font-size: 13px;
  line-height: 23px;
  white-space: nowrap;
  letter-spacing: -0.5px;
}
.fbClose {
  font-size: 11px;
}

/* scrollbar */
.scrollbar {
  width: 23px;
  flex: none;
  display: flex;
  flex-direction: column;
  background: #f1f1f1;
}
.scrollTop {
  height: 26px;
  display: flex;
  align-items: center;
  justify-content: center;
  background: #fff;
}
.arrowUp {
  border: 6px solid transparent;
  border-bottom: 7px solid #9a9a9a;
  border-top: 0;
}
.scrollThumb {
  height: 820px;
  background: #bdbdbd;
}
.scrollEnd {
  flex: 1;
  display: flex;
  align-items: flex-end;
  justify-content: center;
  padding-bottom: 8px;
}
.arrowDown {
  border: 6px solid transparent;
  border-top: 7px solid #505050;
  border-bottom: 0;
}

/* taskbar */
.taskbar {
  height: 60px;
  flex: none;
  box-sizing: border-box;
  display: flex;
  align-items: center;
  position: relative;
  border-top: 1px solid #b7c0ca;
  background: linear-gradient(90deg, #e4edf5 0%, #dfe8f4 25%, #d2ddf2 50%, #d9e4f3 70%, #e3edf5 100%);
  font-family: "Open Sans", sans-serif;
  color: #222;
}
.weather {
  width: 502px;
  flex: none;
  display: flex;
  align-items: center;
  padding-left: 24px;
  box-sizing: border-box;
}
.cloud {
  width: 32px;
  height: 24px;
}
.weatherText {
  margin-left: 8px;
  margin-top: -2px;
  display: flex;
  flex-direction: column;
  font-size: 14.500px;
  line-height: 20px;
}
.muted {
  color: #666;
}
.winLogo {
  width: 29px;
  height: 30px;
  flex: none;
}
.winSearch {
  margin-left: 18px;
  width: 272px;
  height: 38px;
  flex: none;
  box-sizing: border-box;
  display: flex;
  align-items: center;
  gap: 9px;
  padding-left: 13px;
  background: #f1f5fb;
  border: 1px solid #c9d3e2;
  border-radius: 19px;
  font-size: 19px;
  color: #555;
}
.appRow {
  display: flex;
  margin-left: 4px;
}
.app {
  width: 55px;
  height: 59px;
  position: relative;
  display: flex;
  justify-content: center;
  padding-top: 13px;
  box-sizing: border-box;
}
.app.current::before {
  content: "";
  position: absolute;
  left: 4px;
  top: 5px;
  width: 48px;
  height: 48px;
  background: #edf1fa;
  border-radius: 4px;
}
.appGlyph {
  width: 30px;
  height: 32px;
  position: relative;
}
.faceBadge {
  position: absolute;
  left: 31px;
  top: 3px;
  width: 20px;
  height: 24px;
  border-radius: 50%;
  background: radial-gradient(ellipse 32% 38% at 50% 55%, #d9a98f 85%, #1d1512 100%);
}
.sushiBadge {
  position: absolute;
  left: 32px;
  top: 3px;
  width: 20px;
  height: 24px;
}
.countBadge {
  position: absolute;
  left: 31px;
  top: 6px;
  width: 19px;
  height: 15px;
  border-radius: 4px;
  background: #e8403c;
  color: #fff;
  font-size: 10px;
  line-height: 15px;
  text-align: center;
}
.runDot {
  position: absolute;
  left: 23.500px;
  top: 49px;
  width: 8px;
  height: 4px;
  border-radius: 2px;
  background: #6e7580;
}
.currentDot {
  left: 18px;
  width: 19px;
  background: #0a78d4;
}
.tray {
  flex: 1;
  display: flex;
  align-items: center;
  padding-right: 20px;
  font-size: 14.500px;
}
.trayCaret {
  width: 14px;
  height: 8px;
  margin-left: 161px;
}
.mic {
  width: 16px;
  height: 24px;
  margin-left: 24px;
}
.trayLang {
  margin-left: 16px;
  width: 50px;
  display: flex;
  flex-direction: column;
  align-items: center;
  line-height: 20px;
}
.wifi {
  width: 20px;
  height: 16px;
  margin-left: 12px;
}
.speaker {
  width: 20px;
  height: 16px;
  margin-left: 9px;
}
.battery {
  width: 22px;
  height: 16px;
  margin-left: 9px;
}
.clock {
  margin-left: auto;
  display: flex;
  flex-direction: column;
  align-items: flex-end;
  line-height: 20px;
}
</style>

<style>
html,
body {
  margin: 0;
  overflow: hidden;
}
</style>
